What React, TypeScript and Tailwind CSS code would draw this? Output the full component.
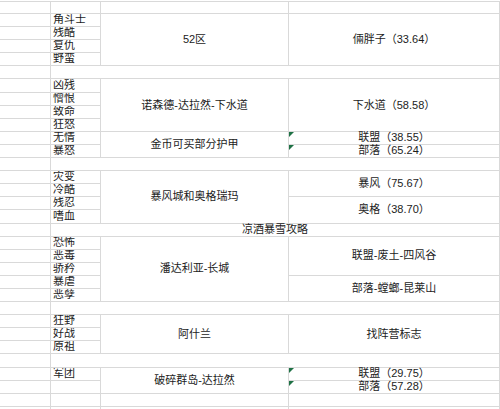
import React from "react";

type Entry = { text: string; span: number; flag?: boolean };
type Group = { labels: string[]; c: string; d: Entry[] };

const spans: Record<number, string> = {
  1: "row-span-1",
  2: "row-span-2",
  3: "row-span-3",
  4: "row-span-4",
  5: "row-span-5",
};

const groups: (Group | "spacer" | { title: string })[] = [
  { labels: ["角斗士", "残酷", "复仇", "野蛮"], c: "52区", d: [{ text: "倆胖子（33.64）", span: 4 }] },
  "spacer",
  { labels: ["凶残", "憎恨", "致命", "狂怒"], c: "诺森德-达拉然-下水道", d: [{ text: "下水道（58.58）", span: 4 }] },
  {
    labels: ["无情", "暴怒"],
    c: "金币可买部分护甲",
    d: [
      { text: "联盟（38.55）", span: 1, flag: true },
      { text: "部落（65.24）", span: 1, flag: true },
    ],
  },
  "spacer",
  {
    labels: ["灾变", "冷酷", "残忍", "嗜血"],
    c: "暴风城和奥格瑞玛",
    d: [
      { text: "暴风（75.67）", span: 2 },
      { text: "奥格（38.70）", span: 2 },
    ],
  },
  { title: "凉酒暴雪攻略" },
  {
    labels: ["恐怖", "恶毒", "骄矜", "暴虐", "恶孽"],
    c: "潘达利亚-长城",
    d: [
      { text: "联盟-废土-四风谷", span: 3 },
      { text: "部落-螳螂-昆莱山", span: 2 },
    ],
  },
  "spacer",
  { labels: ["狂野", "好战", "原祖"], c: "阿什兰", d: [{ text: "找阵营标志", span: 3 }] },
  "spacer",
  {
    labels: ["军团", ""],
    c: "破碎群岛-达拉然",
    d: [
      { text: "联盟（29.75）", span: 1, flag: true },
      { text: "部落（57.28）", span: 1, flag: true },
    ],
  },
];

const cell = "border-b border-r border-[#d9d9d9]";

function Flag() {
  // little green comment/error marker in the cell corner
  return (
    <span className="absolute left-0 top-0 w-0 h-0 border-t-[5px] border-r-[5px] border-t-[#1e7145] border-r-transparent" />
  );
}

export default function App() {
  const cells: React.ReactNode[] = [];
  let k = 0;

  // top partial row
  for (let i = 0; i < 4; i++) {
    cells.push(<div key={k++} className={cn(cell, "border-t")} />);
  }

  groups.forEach((g) => {
    if (g === "spacer") {
      cells.push(<div key={k++} className={cell} />);
      cells.push(<div key={k++} className={cn(cell, "col-span-3")} />);
      return;
    }
    if ("title" in g) {
      cells.push(<div key={k++} className={cell} />);
      cells.push(
        <div key={k++} className={cn(cell, "col-span-3 flex items-center justify-center")}>
          {g.title}
        </div>
      );
      return;
    }
    let dRow = 0;
    let dIdx = 0;
    g.labels.forEach((label, r) => {
      cells.push(<div key={k++} className={cell} />);
      cells.push(
        <div key={k++} className={cn(cell, "flex items-end pl-[2px] pb-[1px] overflow-hidden")}>
          {label}
        </div>
      );
      if (r === 0) {
        cells.push(
          <div key={k++} className={cn(cell, spans[g.labels.length], "flex items-center justify-center")}>
            {g.c}
          </div>
        );
      }
      if (r === dRow && dIdx < g.d.length) {
        const e = g.d[dIdx];
        cells.push(
          <div key={k++} className={cn(cell, spans[e.span], "relative flex items-center justify-center")}>
            {e.flag && <Flag />}
            {e.text}
          </div>
        );
        dRow += e.span;
        dIdx++;
      }
    });
  });

  // trailing empty rows
  for (let i = 0; i < 8; i++) {
    cells.push(<div key={k++} className={cell} />);
  }

  return (
    <div className="w-[500px] h-[409px] overflow-hidden bg-white pt-px text-[11px] leading-none text-[#1c1c1c] font-['Liberation_Sans','Noto_Sans_CJK_SC',sans-serif]">
      <div className="grid grid-cols-[51px_50px_188px_1fr] grid-rows-[13px_repeat(32,13.1px)]">
        {cells}
      </div>
    </div>
  );
}

function cn(...c: (string | false | undefined)[]) {
  return c.filter(Boolean).join(" ");
}
